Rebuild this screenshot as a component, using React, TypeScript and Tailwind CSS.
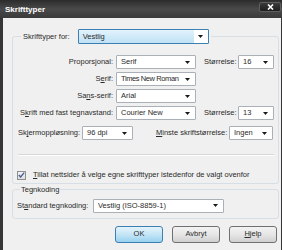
import type { ReactNode } from 'react';

const Arrow = () => (
  <svg width="5" height="3" viewBox="0 0 5 3" className="shrink-0">
    <polygon points="0,0 5,0 2.5,3" fill="#1a1a1a" />
  </svg>
);

function Select({ className, children }: { className: string; children: ReactNode }) {
  return (
    <div
      className={`h-[14px] shrink-0 flex items-center justify-between bg-white border border-[#a9b0b8] rounded-[1px] pl-[4px] pr-[5px] ${className}`}
    >
      <span className="whitespace-nowrap">{children}</span>
      <Arrow />
    </div>
  );
}

function Btn({ children, primary }: { children: ReactNode; primary?: boolean }) {
  return (
    <div
      className={
        primary
          ? 'w-[48px] h-[17px] flex items-center justify-center rounded-[3px] border border-[#3c7fb1] bg-gradient-to-b from-[#e5f4fc] via-[#c4e5f6] to-[#98d1ef]'
          : 'w-[48px] h-[17px] flex items-center justify-center rounded-[3px] border border-[#707070] bg-gradient-to-b from-[#f3f3f3] via-[#e6e6e6] to-[#d0d0d0]'
      }
    >
      {children}
    </div>
  );
}

export default function App() {
  return (
    <div className="w-[282px] h-[250px] overflow-hidden flex flex-col bg-[#363636] font-['Liberation_Sans',Arial,sans-serif] text-[7.5px] leading-none text-[#2a2a2a]">
      {/* title bar */}
      <div className="h-[18px] shrink-0 flex justify-between bg-gradient-to-b from-[#2c2c2c] via-[#4a4a4a] to-[#3a3a3a]">
        <span className="pl-[5px] pt-[6px] text-[8px] font-bold text-white">Skrifttyper</span>
        <div className="mt-[2px] mr-[1px] w-[22px] h-[10px] rounded-[2px] border border-[#5e5e5e] bg-gradient-to-b from-[#3a3a3a] to-[#1e1e1e] flex items-center justify-center">
          <svg width="7" height="6" viewBox="0 0 7 6">
            <path d="M1 0.5 L6 5.5 M6 0.5 L1 5.5" stroke="white" strokeWidth="1.6" />
          </svg>
        </div>
      </div>

      <div className="flex-1 ml-[3px] mr-[1px] bg-[#f0f0f0] pl-[9px] pr-[2px] pt-[11px]">
        {/* Skrifttyper for */}
        <fieldset className="border border-[#d5dfe5] rounded-[3px] pt-[11px] pb-[3px]">
          <legend className="ml-[8px] px-[2px] flex items-center gap-[8px]">
            <span>Skrifttyper for:</span>
            <div className="w-[131px] h-[15px] flex border border-[#3c7fb1] rounded-[1px]">
              <div className="flex-1 flex items-center pl-[4px] bg-gradient-to-b from-[#e3f3fc] to-[#bfe1f6]">Vestlig</div>
              <div className="w-[14px] bg-white flex items-center justify-center">
                <Arrow />
              </div>
            </div>
          </legend>

          <div className="flex flex-col gap-[3px]">
            <div className="flex items-center">
              <span className="w-[100px] text-right">Proporsjonal:</span>
              <Select className="ml-[3px] w-[80px]">Serif</Select>
              <span className="ml-[8px] w-[34px]">Størrelse:</span>
              <Select className="w-[36px]">16</Select>
            </div>
            <div className="flex items-center">
              <span className="w-[100px] text-right">
                S<u>e</u>rif:
              </span>
              <Select className="ml-[3px] w-[80px]">
                <span className="tracking-[-0.4px]">Times New Roman</span>
              </Select>
            </div>
            <div className="flex items-center">
              <span className="w-[100px] text-right">
                Sa<u>n</u>s-serif:
              </span>
              <Select className="ml-[3px] w-[80px]">Arial</Select>
            </div>
            <div className="flex items-center">
              <span className="w-[100px] text-right">
                S<u>k</u>rift med fast tegnavstand:
              </span>
              <Select className="ml-[3px] w-[80px]">Courier New</Select>
              <span className="ml-[8px] w-[34px]">Størrelse:</span>
              <Select className="w-[36px]">13</Select>
            </div>
          </div>

          <div className="mt-[6px] pl-[5px] flex items-center">
            <span className="w-[64px]">
              Sk<u>j</u>ermoppløsning:
            </span>
            <Select className="w-[51px]">96 dpi</Select>
            <span className="ml-[23px] w-[73px]">
              <u>M</u>inste skriftstørrelse:
            </span>
            <Select className="w-[44px]">Ingen</Select>
          </div>

          <div className="mt-[14px] ml-[5px] mr-[4px] h-px bg-[#d8d8d8] border-b border-white box-content" />

          <div className="mt-[14px] pl-[4px] h-[10px] flex items-center">
            <div className="w-[9px] h-[9px] border border-[#8e8f8f] bg-gradient-to-b from-[#f4f4f4] to-[#dedede] flex items-center justify-center">
              <svg width="7" height="6" viewBox="0 0 7 6">
                <path d="M0.8 3 L2.6 5 L6.2 0.6" fill="none" stroke="#4a5f97" strokeWidth="1.4" />
              </svg>
            </div>
            <span className="ml-[7px]">
              <u>T</u>illat nettsider å velge egne skrifttyper istedenfor de valgt ovenfor
            </span>
          </div>
        </fieldset>

        {/* Tegnkoding */}
        <fieldset className="mt-[2px] border border-[#d5dfe5] rounded-[3px] pt-[5px] pb-[5px]">
          <legend className="ml-[7px] px-[1px]">Tegnkoding</legend>
          <div className="pl-[4px] flex items-center">
            <span className="w-[76px]">
              St<u>a</u>ndard tegnkoding:
            </span>
            <Select className="w-[131px]">Vestlig (ISO-8859-1)</Select>
          </div>
        </fieldset>

        <div className="mt-[7px] mr-[2px] flex justify-end gap-[9px]">
          <Btn primary>OK</Btn>
          <Btn>Avbryt</Btn>
          <Btn>
            <span>
              <u>H</u>jelp
            </span>
          </Btn>
        </div>
      </div>
    </div>
  );
}
